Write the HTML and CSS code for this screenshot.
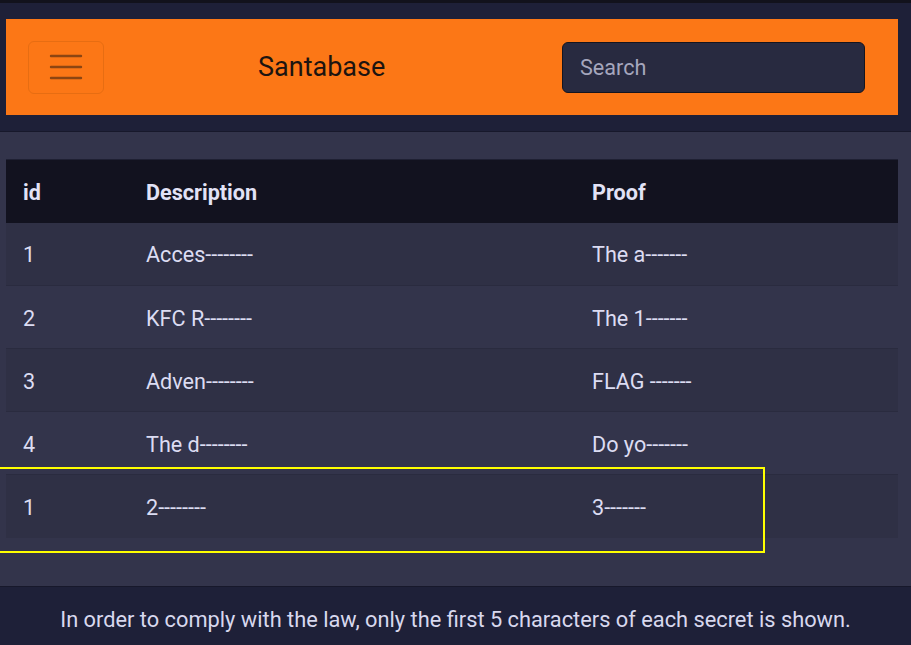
FILE: index.html
```html
<!DOCTYPE html>
<html>
<head>
<meta charset="utf-8">
<link rel="stylesheet" href="styles.css">
</head>
<body>
<div class="topline"></div>
<header class="nav">
  <div class="navbar">
    <button class="burger" aria-label="menu">
      <svg width="34" height="26" viewBox="0 0 34 26"><g stroke="#8c4512" stroke-width="2.4" stroke-linecap="round"><line x1="2" y1="2" x2="32" y2="2"/><line x1="2" y1="13" x2="32" y2="13"/><line x1="2" y1="24" x2="32" y2="24"/></g></svg>
    </button>
    <div class="brand">Santabase</div>
    <input class="search" type="text" placeholder="Search">
  </div>
</header>
<main class="main">
  <table class="grid">
    <thead>
      <tr><th class="c-id">id</th><th class="c-desc">Description</th><th class="c-proof">Proof</th></tr>
    </thead>
    <tbody>
      <tr class="odd"><td>1</td><td>Acces--------</td><td>The a-------</td></tr>
      <tr><td>2</td><td>KFC R--------</td><td>The 1-------</td></tr>
      <tr class="odd"><td>3</td><td>Adven--------</td><td>FLAG -------</td></tr>
      <tr><td>4</td><td>The d--------</td><td>Do yo-------</td></tr>
      <tr class="odd last"><td>1</td><td>2--------</td><td>3-------</td></tr>
    </tbody>
  </table>
  <div class="highlight"></div>
</main>
<footer class="foot">In order to comply with the law, only the first 5 characters of each secret is shown.</footer>
</body>
</html>
```

FILE: styles.css
```css
* { box-sizing: border-box; }
html, body { margin: 0; padding: 0; }
body {
  background: #33344b;
  font-family: Roboto, "Noto Sans", sans-serif;
  color: #dcdcf2;
  width: 911px;
  height: 645px;
  overflow: hidden;
  position: relative;
}
.topline { height: 3px; background: #12121c; }
.nav {
  background: #1e2038;
  padding: 16px 13px 16px 6px;
  border-bottom: 1px solid #17182b;
}
.navbar {
  background: #fc7716;
  height: 96px;
  display: flex;
  align-items: center;
}
.burger {
  margin-left: 22px;
  width: 76px;
  height: 53px;
  border: 1px solid #e76d12;
  border-radius: 6px;
  background: transparent;
  display: flex;
  align-items: center;
  justify-content: center;
  padding: 0;
}
.brand {
  margin-left: 154px;
  font-size: 27px;
  color: #1c1410;
  width: 150px;
}
.search {
  margin-left: 154px;
  width: 303px;
  height: 51px;
  background: #282a40;
  border: 1px solid #15151f;
  border-radius: 6px;
  padding: 0 17px;
  font-family: Roboto, sans-serif;
  font-size: 21.6px;
  color: #dcdcf2;
  outline: none;
}
.search::placeholder { color: #a5a6bd; }
.main {
  padding: 27px 13px 48px 6px;
  position: relative;
}
.grid {
  width: 892px;
  border-collapse: collapse;
  table-layout: fixed;
  font-size: 21.6px;
}
.grid th, .grid td {
  text-align: left;
  padding: 0 0 0 17px;
}
.grid thead tr { background: #12121f; border-top: 1px solid #1f2033; }
.grid th { font-weight: 700; color: #e2e2f6; height: 63px; padding-top: 2px; }
.c-id { width: 123px; }
.c-desc { width: 446px; }
.grid tbody tr { border-bottom: 1px solid #2a2b3f; }
.grid tbody tr.last { border-bottom: none; }
.grid tbody tr.odd { background: #2f3045; }
.grid td { height: 63px; padding-top: 2px; }
.highlight {
  position: absolute;
  left: -6px;
  top: 335px;
  width: 771px;
  height: 86px;
  border: 2px solid #ffff00;
}
.foot {
  background: #1e2038;
  border-top: 1px solid #17182b;
  height: 60px;
  text-align: center;
  font-size: 21.8px;
  color: #d8d8ee;
  padding-top: 20px;
}
```
